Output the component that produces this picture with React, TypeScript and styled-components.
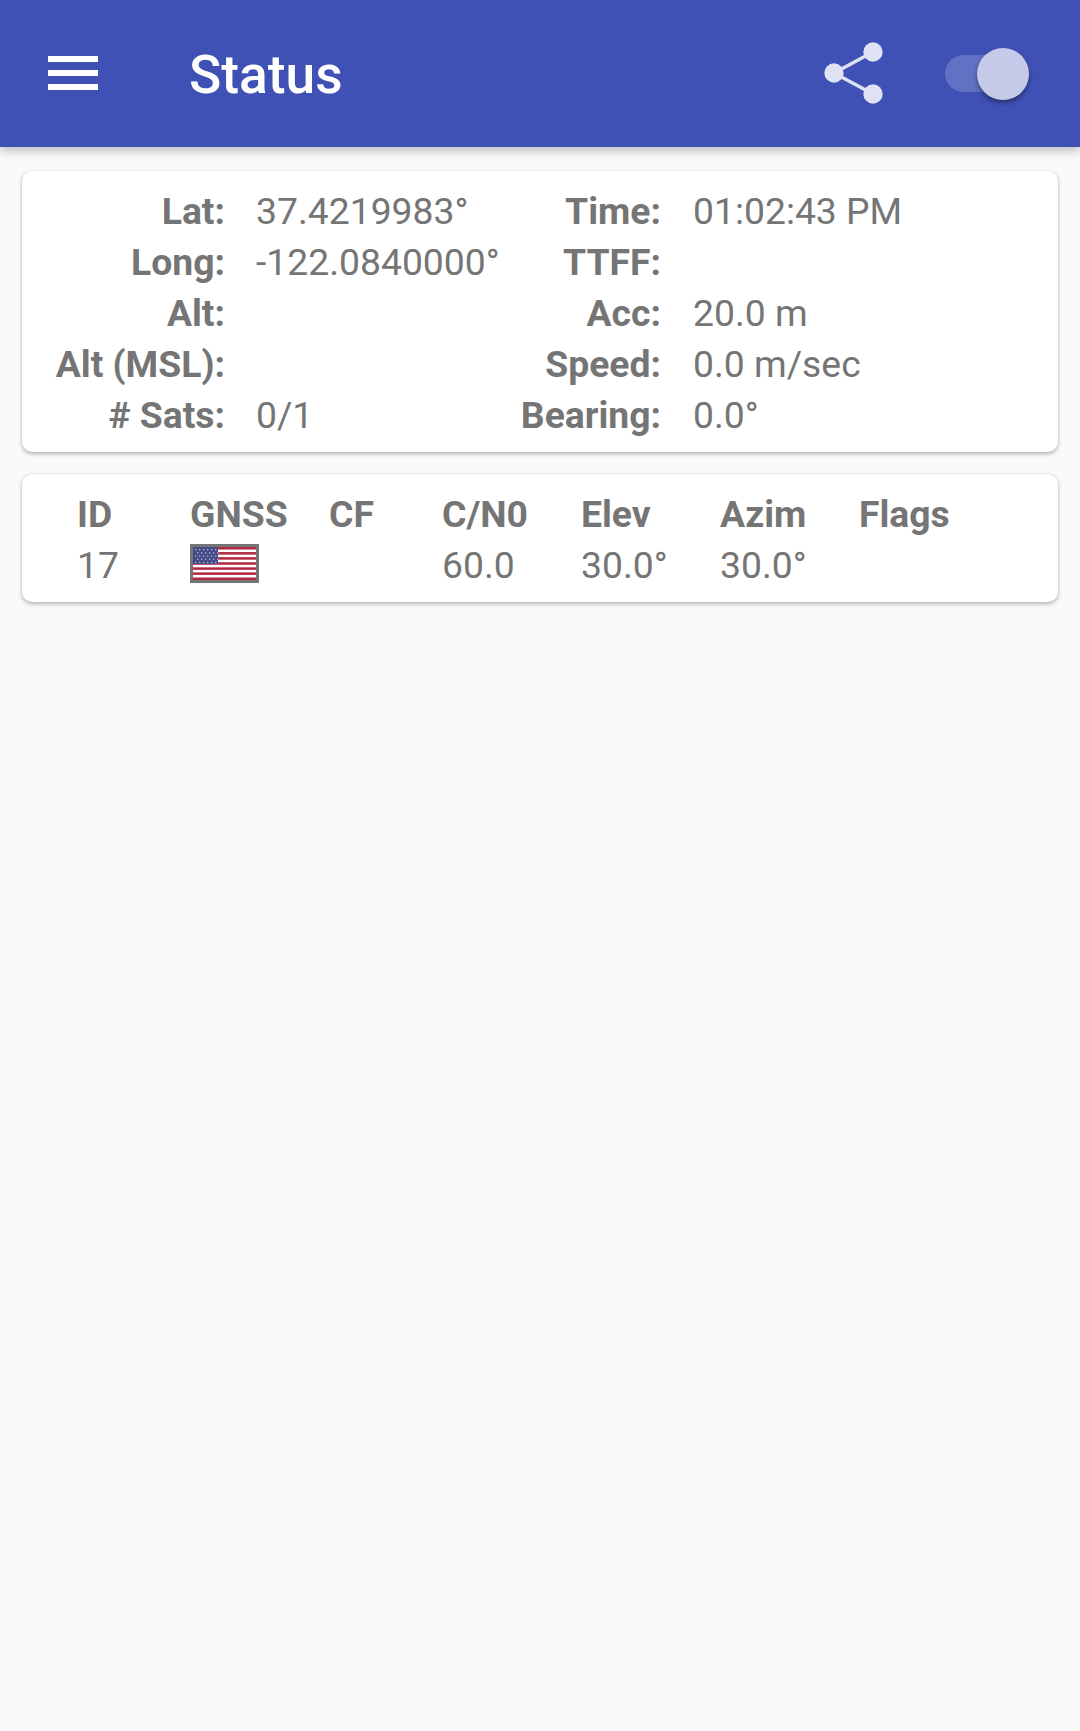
import { Fragment } from 'react'
import styled, { createGlobalStyle } from 'styled-components'

const GlobalStyle = createGlobalStyle`
  html, body {
    margin: 0;
    padding: 0;
    background: #fafafa;
  }
`;

const Page = styled.div`
  font-family: Roboto, 'Liberation Sans', sans-serif;
  color: #757575;
  background: #fafafa;
  min-height: 1731px;
  width: 1080px;
`;

const AppBar = styled.header`
  height: 147px;
  background: #3f51b5;
  box-shadow: 0 3px 10px rgba(0, 0, 0, 0.28);
  display: flex;
  align-items: center;
  padding-left: 48px;
  padding-right: 61px;
  box-sizing: border-box;
  position: relative;
`;

const Menu = styled.svg`
  width: 50px;
  height: 34px;
  display: block;
  flex: none;
  margin-bottom: 1px;
`;

const Title = styled.h1`
  margin: 3px 0 0 91px;
  font-size: 53.3px;
  line-height: 60px;
  font-weight: 500;
  color: #fff;
  flex: 1;
`;

const ShareIcon = styled.svg`
  width: 64px;
  height: 64px;
  display: block;
  flex: none;
  margin-right: 59px;
  margin-bottom: 2px;
`;

const Toggle = styled.div`
  position: relative;
  width: 74px;
  height: 37px;
  margin-bottom: 1px;
  border-radius: 19px;
  background: #6171c3;
  flex: none;
`;

const Thumb = styled.span`
  position: absolute;
  top: -7px;
  right: -10px;
  width: 52px;
  height: 52px;
  border-radius: 50%;
  background: #c5cae9;
  box-shadow: 0 3px 5px rgba(0, 0, 0, 0.38);
`;

const Content = styled.main`
  padding: 24px 22px;
  display: flex;
  flex-direction: column;
  gap: 22px;
`;

const Card = styled.section`
  background: #fff;
  border-radius: 10px;
  box-shadow: 0 2px 4px rgba(0, 0, 0, 0.28), 0 0 2px rgba(0, 0, 0, 0.1);
`;

const LocationGrid = styled.div`
  display: grid;
  grid-template-columns: 203px 207px 229px 1fr;
  grid-auto-rows: 51px;
  padding: 15px 0 11px 0;
  font-size: 37.3px;
  line-height: 51px;
`;

const Label = styled.div`
  font-weight: 700;
  text-align: right;
  white-space: nowrap;
`;

const Value = styled.div<{ $pad: number }>`
  padding-left: ${(p) => p.$pad}px;
  white-space: nowrap;
`;

const SatTable = styled.div`
  display: grid;
  grid-template-columns: 113px 139px 113px 139px 139px 139px 139px;
  grid-auto-rows: 51px;
  padding: 15px 0 11px 55px;
  font-size: 37.3px;
  line-height: 51px;
`;

const HeadCell = styled.div`
  font-weight: 700;
  white-space: nowrap;
`;

const Cell = styled.div`
  white-space: nowrap;
`;

const FlagBox = styled.svg`
  display: block;
  width: 69px;
  height: 39px;
  margin-top: 4px;
`;

function UsFlag() {
  const stripes = Array.from({ length: 13 }, (_, i) => i)
  const stars: [number, number][] = []
  for (let row = 0; row < 5; row++) {
    for (let col = 0; col < 6; col++) {
      stars.push([5 + col * 4 + (row % 2) * 2, 5 + row * 3.2])
    }
  }
  return (
    <FlagBox viewBox="0 0 69 39">
      <rect width="69" height="39" fill="#757575" />
      <rect x="3" y="3" width="63" height="33" fill="#fff" />
      {stripes.map((i) =>
        i % 2 === 0 ? (
          <rect key={i} x="3" y={3 + (i * 33) / 13} width="63" height={33 / 13} fill="#b22a42" />
        ) : null
      )}
      <rect x="3" y="3" width="25" height="17" fill="#434a85" />
      {stars.map(([x, y]) => (
        <rect key={`${x}-${y}`} x={x} y={y} width="1.4" height="1.4" fill="#a9acd0" />
      ))}
    </FlagBox>
  )
}

const rows = [
  ['Lat:', '37.4219983°', 'Time:', '01:02:43 PM'],
  ['Long:', '-122.0840000°', 'TTFF:', ''],
  ['Alt:', '', 'Acc:', '20.0 m'],
  ['Alt (MSL):', '', 'Speed:', '0.0 m/sec'],
  ['# Sats:', '0/1', 'Bearing:', '0.0°'],
]

const headers = ['ID', 'GNSS', 'CF', 'C/N0', 'Elev', 'Azim', 'Flags']

function App() {
  return (
    <Page>
      <GlobalStyle />
      <AppBar>
        <Menu viewBox="0 0 50 34">
          <rect x="0" y="0" width="50" height="6" fill="#fff" />
          <rect x="0" y="14" width="50" height="6" fill="#fff" />
          <rect x="0" y="28" width="50" height="6" fill="#fff" />
        </Menu>
        <Title>Status</Title>
        <ShareIcon viewBox="0 0 64 64">
          <g fill="#dfe2f3" stroke="#dfe2f3">
            <line x1="12" y1="32" x2="51" y2="11" strokeWidth="3.5" />
            <line x1="12" y1="32" x2="51" y2="53" strokeWidth="3.5" />
            <circle cx="12" cy="32" r="9.7" stroke="none" />
            <circle cx="51" cy="11" r="9.7" stroke="none" />
            <circle cx="51" cy="53" r="9.7" stroke="none" />
          </g>
        </ShareIcon>
        <Toggle>
          <Thumb />
        </Toggle>
      </AppBar>
      <Content>
        <Card>
          <LocationGrid>
            {rows.map((r) => (
              <Fragment key={r[0]}>
                <Label>{r[0]}</Label>
                <Value $pad={31}>{r[1]}</Value>
                <Label>{r[2]}</Label>
                <Value $pad={32}>{r[3]}</Value>
              </Fragment>
            ))}
          </LocationGrid>
        </Card>
        <Card>
          <SatTable>
            {headers.map((h) => (
              <HeadCell key={h}>{h}</HeadCell>
            ))}
            <Cell>17</Cell>
            <Cell>
              <UsFlag />
            </Cell>
            <Cell />
            <Cell>60.0</Cell>
            <Cell>30.0°</Cell>
            <Cell>30.0°</Cell>
            <Cell />
          </SatTable>
        </Card>
      </Content>
    </Page>
  )
}

export default App
